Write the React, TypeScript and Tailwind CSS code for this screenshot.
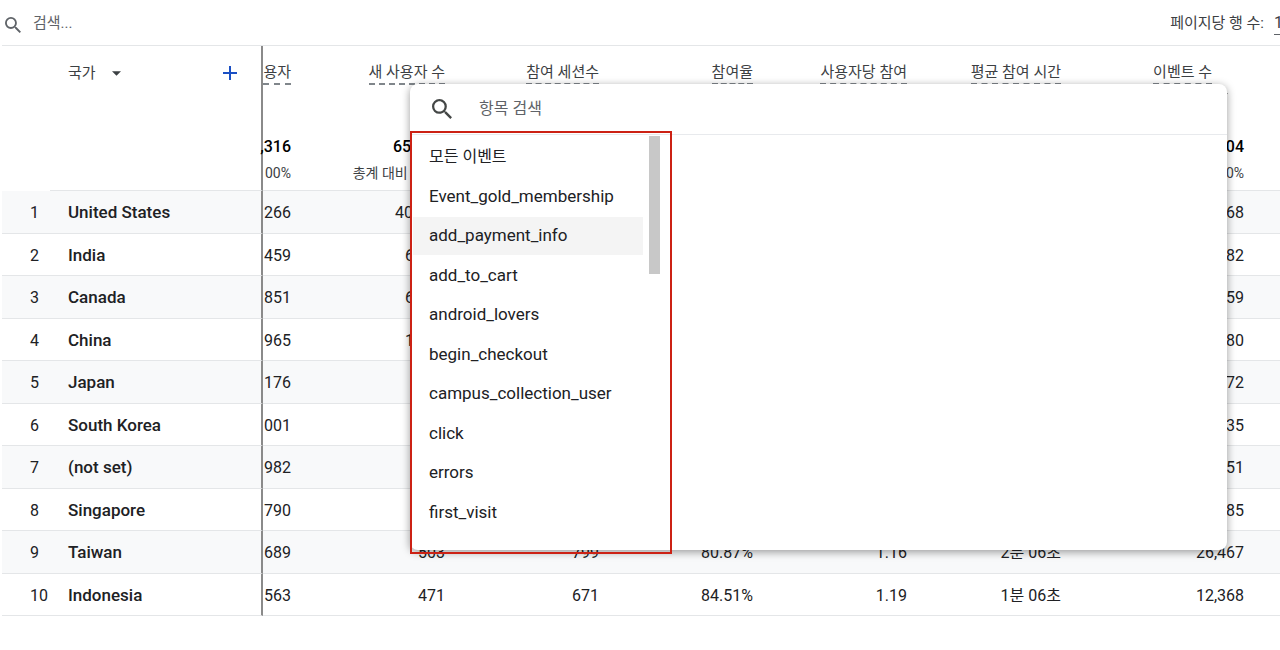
import React, { useState } from "react";

type Row = {
  country: string;
  users: string;
  newUsers: string;
  sessions?: string;
  rate?: string;
  perUser?: string;
  time?: string;
  events: string;
};

const rows: Row[] = [
  { country: "United States", users: "266", newUsers: "40", events: "68" },
  { country: "India", users: "459", newUsers: "6", events: "82" },
  { country: "Canada", users: "851", newUsers: "6", events: "59" },
  { country: "China", users: "965", newUsers: "1", events: "80" },
  { country: "Japan", users: "176", newUsers: "", events: "72" },
  { country: "South Korea", users: "001", newUsers: "", events: "35" },
  { country: "(not set)", users: "982", newUsers: "", events: "51" },
  { country: "Singapore", users: "790", newUsers: "", events: "85" },
  { country: "Taiwan", users: "689", newUsers: "503", sessions: "799", rate: "80.87%", perUser: "1.16", time: "2분 06초", events: "26,467" },
  { country: "Indonesia", users: "563", newUsers: "471", sessions: "671", rate: "84.51%", perUser: "1.19", time: "1분 06초", events: "12,368" },
];

const columns = ["새 사용자 수", "참여 세션수", "참여율", "사용자당 참여", "평균 참여 시간"];

const events = [
  "모든 이벤트",
  "Event_gold_membership",
  "add_payment_info",
  "add_to_cart",
  "android_lovers",
  "begin_checkout",
  "campus_collection_user",
  "click",
  "errors",
  "first_visit",
];

const SearchIcon = ({ className }: { className?: string }) => (
  <svg viewBox="3 3 17.5 17.5" className={className} fill="currentColor" aria-hidden="true">
    <path d="M15.5 14h-.79l-.28-.27A6.471 6.471 0 0 0 16 9.5 6.5 6.5 0 1 0 9.5 16c1.61 0 3.09-.59 4.23-1.57l.27.28v.79l5 4.99L20.49 19l-4.99-5zm-6 0C7.01 14 5 11.99 5 9.5S7.01 5 9.5 5 14 7.01 14 9.5 11.99 14 9.5 14z" />
  </svg>
);

const Caret = () => (
  <svg viewBox="0 0 10 5" className="h-[5px] w-[9px]" fill="currentColor" aria-hidden="true">
    <path d="M0 0h10L5 5z" />
  </svg>
);

const HeaderLabel = ({ children }: { children: React.ReactNode }) => (
  <span className="inline-block border-b-2 border-dashed border-[#80868b] text-[15px] leading-[22px] whitespace-nowrap">
    {children}
  </span>
);

// Values that run under the picker start at a fixed distance from the column's edge
const NewUsers = ({ value }: { value: string }) => {
  if (value.length === 3) return <>{value}</>;
  return (
    <span className={value.length === 2 ? "inline-block w-[50px] text-left" : "inline-block w-10 text-left"}>
      {value}
    </span>
  );
};

const Toolbar = () => (
  <div className="ml-0.5 flex h-[46px] items-center justify-between border-b border-[#e4e6e8] text-[#3c4043]">
    <label className="flex items-center gap-3 pl-[3px]">
      <SearchIcon className="mt-1 h-4 w-4 text-[#5f6368]" />
      <input
        type="text"
        aria-label="검색"
        placeholder="검색..."
        className="w-64 bg-transparent pt-0.5 text-[15px] outline-none placeholder:text-[#5f6368]"
      />
    </label>
    <div className="-mr-12 flex items-center gap-2.5 text-[15px]">
      <label htmlFor="page-size" className="pt-0.5">
        페이지당 행 수:
      </label>
      <select id="page-size" className="h-6 w-[54px] appearance-none border-b border-[#5f6368] bg-transparent pb-1 text-base outline-none">
        <option>10</option>
      </select>
    </div>
  </div>
);

const ReportTable = () => (
  <table className="ml-0.5 w-[calc(100%-2px)] table-fixed border-separate border-spacing-0 text-base text-[#202124]">
    <colgroup>
      <col className="w-12" />
      <col className="w-[213px]" />
      <col className="w-11" />
      <col className="w-[154px]" />
      <col className="w-[154px]" />
      <col className="w-[154px]" />
      <col className="w-[154px]" />
      <col className="w-[154px]" />
      <col />
    </colgroup>
    <thead className="align-top text-[#3c4043]">
      <tr className="h-[85px] [&>th]:font-normal">
        <th />
        <th className="border-r-2 border-[#8a8a8a] pt-4 pr-6 pl-[18px]">
          <div className="flex items-center justify-between">
            <button type="button" className="flex items-center gap-4 text-[15px]">
              국가 <Caret />
            </button>
            <button type="button" aria-label="측정기준 추가" className="text-[#1a4fc4]">
              <svg viewBox="0 0 14 14" className="h-3.5 w-3.5" stroke="currentColor" strokeWidth="2" aria-hidden="true">
                <path d="M7 0v14M0 7h14" />
              </svg>
            </button>
          </div>
        </th>
        <th className="pt-[15px] pr-4">
          <div className="flex justify-end">
            <HeaderLabel>용자</HeaderLabel>
          </div>
        </th>
        {columns.map((name) => (
          <th key={name} className="pt-[15px] pr-4">
            <div className="flex justify-end">
              <HeaderLabel>{name}</HeaderLabel>
            </div>
          </th>
        ))}
        <th className="pt-[15px] pr-[68px]">
          <div className="flex justify-end">
            <HeaderLabel>이벤트 수</HeaderLabel>
          </div>
          <div className="-mr-4 flex justify-end pt-2">
            <Caret />
          </div>
        </th>
      </tr>
      <tr className="h-[60px] [&>td]:border-b [&>td]:border-[#e4e6e8] [&>td]:text-right">
        <td className="border-b-0!" />
        <td className="border-r-2 border-r-[#8a8a8a]!" />
        <td className="pt-1 pr-4">
          <div className="flex flex-col items-end gap-0.5 leading-6">
            <b className="font-medium text-black">,316</b>
            <span className="text-sm leading-6">00%</span>
          </div>
        </td>
        <td className="pt-1 pr-4">
          <div className="flex flex-col items-end gap-0.5 leading-6">
            <b className="w-[52px] text-left font-medium text-black">65</b>
            <span className="text-sm leading-6">총계 대비 100%</span>
          </div>
        </td>
        <td colSpan={4} />
        <td className="pt-1 pr-9">
          <div className="flex flex-col items-end gap-0.5 leading-6">
            <b className="font-medium text-black">04</b>
            <span className="text-sm leading-6">0%</span>
          </div>
        </td>
      </tr>
    </thead>
    <tbody>
      {rows.map((row, i) => (
        <tr
          key={row.country}
          className="odd:h-[43px] even:h-[42px] odd:bg-[#f8f9fa] [&>*]:border-b [&>*]:border-[#e4e6e8] [&>*]:pt-0.5 [&>td]:pr-4 [&>td]:text-right"
        >
          <td className="pr-0! pl-7 text-left!">{i + 1}</td>
          <th scope="row" className="border-r-2 border-r-[#8a8a8a]! pl-[18px] text-left text-[17px] font-medium">
            {row.country}
          </th>
          <td>{row.users}</td>
          <td>
            <NewUsers value={row.newUsers} />
          </td>
          <td>{row.sessions}</td>
          <td>{row.rate}</td>
          <td>{row.perUser}</td>
          <td>{row.time}</td>
          <td className="pr-9!">{row.events}</td>
        </tr>
      ))}
    </tbody>
  </table>
);

const EventPicker = () => {
  const [active, setActive] = useState("add_payment_info");

  return (
    <div className="absolute top-[84px] right-[53px] left-[410px] h-[466px] rounded-lg bg-white shadow-[0_2px_8px_rgba(0,0,0,0.4)]">
      <label className="flex h-[51px] items-center gap-[27px] border-b border-[#e8eaed] pl-[22px]">
        <SearchIcon className="h-5 w-5 text-[#444746]" />
        <input
          type="text"
          aria-label="항목 검색"
          placeholder="항목 검색"
          className="flex-1 bg-transparent text-base outline-none placeholder:text-[#5f6368]"
        />
      </label>
      <div className="flex w-[250px] justify-between pt-px pl-[3px]">
        <ul className="flex w-[230px] flex-col gap-0.5 pt-0.5">
          {events.map((name) => (
            <li key={name} className="text-[17px] first:text-base odd:h-[38px] even:h-[37px]">
              <button
                type="button"
                onClick={() => setActive(name)}
                className={`h-full w-full pl-4 text-left text-[#202124] ${
                  active === name ? "bg-[#f4f4f4]" : ""
                }`}
              >
                {name}
              </button>
            </li>
          ))}
        </ul>
        <div className="h-[138px] w-[11px] bg-[#c8c8c8]" />
      </div>
      <div className="pointer-events-none absolute top-[47px] left-0 h-[423px] w-[262px] border-2 border-[#cc2114]" />
    </div>
  );
};

export default function App() {
  return (
    <main className="relative min-h-screen overflow-hidden bg-white font-[Roboto,'Noto_Sans_CJK_KR',sans-serif]">
      <Toolbar />
      <ReportTable />
      <EventPicker />
    </main>
  );
}
